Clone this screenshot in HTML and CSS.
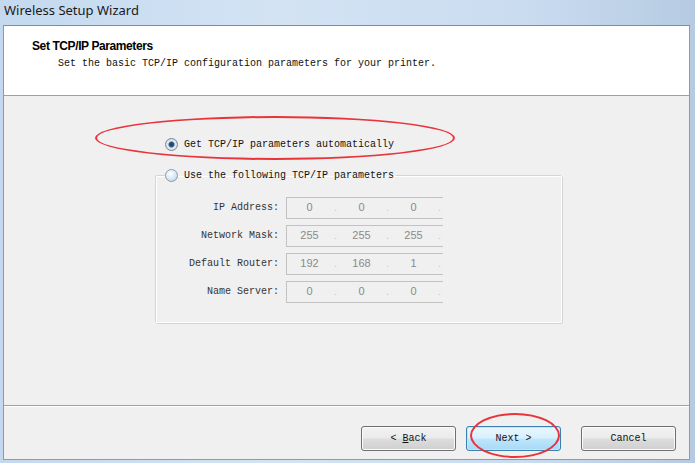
FILE: index.html
```html
<!DOCTYPE html>
<html lang="en">
<head>
    <meta charset="UTF-8">
    <title>Wireless Setup Wizard</title>
    <link rel="stylesheet" href="styles.css">
</head>
<body>
    <div class="window">
        <div class="titlebar">Wireless Setup Wizard</div>
        <div class="frame">
            <div class="header">
                <h1>Set TCP/IP Parameters</h1>
                <p>Set the basic TCP/IP configuration parameters for your printer.</p>
            </div>

            <div class="content">
                <div class="auto-row">
                    <span class="radio checked"></span>
                    <span>Get TCP/IP parameters automatically</span>
                    <span class="mark mark-auto"></span>
                </div>

                <fieldset class="manual">
                    <legend><span class="radio"></span><span>Use the following TCP/IP parameters</span></legend>
                    <div class="fields">
                        <label>IP Address:</label>
                        <div class="ip"><span>0</span><i>.</i><span>0</span><i>.</i><span>0</span><i>.</i></div>
                        <label>Network Mask:</label>
                        <div class="ip"><span>255</span><i>.</i><span>255</span><i>.</i><span>255</span><i>.</i></div>
                        <label>Default Router:</label>
                        <div class="ip"><span>192</span><i>.</i><span>168</span><i>.</i><span>1</span><i>.</i></div>
                        <label>Name Server:</label>
                        <div class="ip"><span>0</span><i>.</i><span>0</span><i>.</i><span>0</span><i>.</i></div>
                    </div>
                </fieldset>
            </div>

            <div class="footer">
                <button class="btn">&lt; <u>B</u>ack</button>
                <button class="btn default">Next &gt;<span class="mark mark-next"></span></button>
                <button class="btn cancel">Cancel</button>
            </div>
        </div>
    </div>
</body>
</html>
```

FILE: styles.css
```css
body {
    margin: 0;
    width: 695px;
    height: 463px;
    overflow: hidden;
    background: #b9d1ea;
}

.window {
    display: flex;
    flex-direction: column;
    height: 463px;
    background: linear-gradient(90deg, #c4d9ef 0%, #d3e3f4 40%, #cadcf0 75%, #b6cbe2 100%);
}

.titlebar {
    height: 25px;
    padding-left: 4px;
    font-family: "Noto Sans", sans-serif;
    font-size: 13px;
    line-height: 21px;
    color: #1a1a1a;
}

.frame {
    margin: 0 5px 3px 3px;
    flex: 1;
    display: flex;
    flex-direction: column;
    background: #f0f0f0;
    border: 1px solid #8a9bb0;
    border-top-color: #7d8ea3;
}

.header {
    height: 69px;
    background: #fff;
    border-bottom: 1px solid #a0a0a0;
    padding-left: 28px;
}

.header h1 {
    margin: 13px 0 0;
    font-family: "Liberation Sans", sans-serif;
    font-size: 12px;
    font-weight: bold;
    letter-spacing: -0.4px;
    color: #000;
}

.header p {
    margin: 5px 0 0 26px;
    font-family: "Liberation Mono", monospace;
    font-size: 10px;
    color: #111;
}

.content {
    height: 309px;
    border-bottom: 1px solid #a0a0a0;
    box-shadow: 0 1px 0 #fff;
    padding-left: 151px;
    font-family: "Liberation Mono", monospace;
    font-size: 10px;
    color: #111;
}

.auto-row {
    position: relative;
    display: flex;
    align-items: center;
    gap: 6px;
    margin: 41px 0 0 10px;
    height: 14px;
}

.radio {
    width: 11px;
    height: 11px;
    border-radius: 50%;
    border: 1px solid #8d9aa8;
    background: radial-gradient(circle at 40% 35%, #ffffff 0%, #d6e7f5 55%, #a8c8e4 100%);
    flex: none;
}

.radio.checked {
    background: radial-gradient(circle, #1d3e63 0, #2b5a8a 2.5px, #e3eaf2 3.5px, #c8d2de 100%);
    border-color: #7a8694;
}

.mark {
    position: absolute;
    border: 2px solid #e8343a;
    border-radius: 50%;
    pointer-events: none;
}

.mark-auto {
    left: -70px;
    top: -21px;
    width: 356px;
    height: 40px;
}

.manual {
    width: 407px;
    margin: 18px 0 0;
    padding: 15px 0 19px;
    border: 1px solid #d5d5d5;
    border-right-color: #fff;
    border-bottom-color: #fff;
    box-shadow: inset 1px 1px 0 #fff, 1px 1px 0 #d5d5d5;
    border-radius: 2px;
    box-sizing: border-box;
}

.manual legend {
    display: flex;
    align-items: center;
    gap: 6px;
    padding: 0 2px 0 0;
    margin-left: 9px;
}

.fields {
    display: grid;
    grid-template-columns: 123px 157px;
    column-gap: 7px;
    row-gap: 6px;
}

.fields label {
    text-align: right;
    line-height: 22px;
    color: #333;
}

.ip {
    height: 22px;
    box-sizing: border-box;
    border: 1px solid #c2c2c2;
    border-right: none;
    display: flex;
    overflow: hidden;
    font-family: "Liberation Sans", sans-serif;
    font-size: 11px;
    color: #8a8a8a;
    line-height: 19px;
}

.ip span {
    flex: none;
    width: 45px;
    text-align: center;
}

.ip i {
    flex: none;
    width: 7px;
    font-style: normal;
    color: #c8c8c8;
    text-align: center;
}

.footer {
    flex: 1;
    display: flex;
    align-items: flex-start;
    justify-content: flex-end;
    padding: 20px 13px 0 0;
}

.btn {
    position: relative;
    width: 95px;
    height: 25px;
    margin-left: 10px;
    font-family: "Liberation Mono", monospace;
    font-size: 10px;
    color: #111;
    border: 1px solid #707070;
    border-radius: 3px;
    background: linear-gradient(#f2f2f2 0%, #ebebeb 48%, #dddddd 52%, #cfcfcf 100%);
    box-shadow: inset 0 0 0 1px #fafafa;
}

.btn.default {
    border-color: #3c7fb1;
    background: linear-gradient(#eaf6fd 0%, #d9f0fc 48%, #bee6fd 52%, #a7d9f5 100%);
    box-shadow: inset 0 0 0 1px #c6e6f8;
}

.btn.cancel {
    margin-left: 20px;
}

.mark-next {
    left: 3px;
    top: -14px;
    width: 86px;
    height: 41px;
}
```
